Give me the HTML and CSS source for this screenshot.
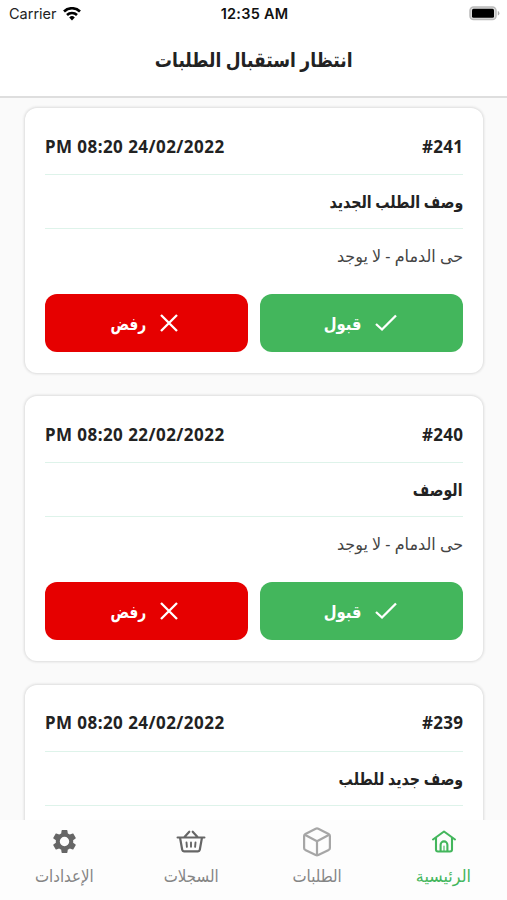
FILE: index.html
```html
<!DOCTYPE html>
<html lang="ar" dir="rtl">
<head>
<meta charset="utf-8">
<meta name="viewport" content="width=device-width">
<title>انتظار استقبال الطلبات</title>
<link rel="stylesheet" href="styles.css">
</head>
<body>
<svg class="defs" aria-hidden="true">
  <symbol id="check" viewBox="0 0 22 18"><path d="M1 10 7 15.500 21 1.500" fill="none" stroke="currentColor" stroke-width="2.300"/></symbol>
  <symbol id="cross" viewBox="0 0 18 18"><path d="M1 1 17 17M17 1 1 17" fill="none" stroke="currentColor" stroke-width="2.300"/></symbol>
</svg>
<div class="app">
  <div class="status" dir="ltr">
    <div class="carrier"><span>Carrier</span>
      <svg width="18" height="14" viewBox="0 0 18 14"><g fill="none" stroke="#000" stroke-width="2.600"><path d="M1 4.500a11.400 11.400 0 0 1 16 0"/><path d="M4 8a7.200 7.200 0 0 1 10 0"/></g><path d="M6.200 10.400a4 4 0 0 1 5.600 0L9 13.400z"/></svg>
    </div>
    <div class="time">12:35 AM</div>
    <svg class="battery" width="31" height="15" viewBox="0 0 31 15"><rect x="1" y="1" width="26" height="12.600" rx="3.600" fill="#ddd" stroke="#bbb" stroke-width="1.500"/><rect x="3" y="2.800" width="22" height="9" rx="1.500"/><path d="M28.800 5v4.500q1.600-.5 1.600-2.200T28.800 5z" fill="#aaa"/></svg>
  </div>
  <header class="header"><h1>انتظار استقبال الطلبات</h1></header>
  <main class="list">
    <article class="card">
      <div class="row top"><span class="num" dir="ltr">#241</span><span class="date" dir="ltr">PM 08:20 24/02/2022</span></div>
      <div class="row title"><span>وصف الطلب الجديد</span></div>
      <div class="place"><span>حى الدمام - لا يوجد</span></div>
      <div class="actions">
        <button class="btn accept"><svg class="check"><use href="#check"/></svg><span>قبول</span></button>
        <button class="btn reject"><svg class="cross"><use href="#cross"/></svg><span>رفض</span></button>
      </div>
    </article>
    <article class="card">
      <div class="row top"><span class="num" dir="ltr">#240</span><span class="date" dir="ltr">PM 08:20 22/02/2022</span></div>
      <div class="row title"><span>الوصف</span></div>
      <div class="place"><span>حى الدمام - لا يوجد</span></div>
      <div class="actions">
        <button class="btn accept"><svg class="check"><use href="#check"/></svg><span>قبول</span></button>
        <button class="btn reject"><svg class="cross"><use href="#cross"/></svg><span>رفض</span></button>
      </div>
    </article>
    <article class="card">
      <div class="row top"><span class="num" dir="ltr">#239</span><span class="date" dir="ltr">PM 08:20 24/02/2022</span></div>
      <div class="row title"><span>وصف جديد للطلب</span></div>
      <div class="place"></div>
    </article>
  </main>
  <nav class="tabs">
    <a class="tab active"><svg width="28" height="30" viewBox="0 0 28 30"><g fill="none" stroke="currentColor" stroke-width="2.100" stroke-linecap="round" stroke-linejoin="round"><path d="M3 12.500 14 4.500 25 12.500"/><path d="M6 11v11.500q0 2 2 2h12q2 0 2-2V11"/><path d="M10.600 24v-6.200a3.400 3.400 0 0 1 6.800 0V24"/><path d="M14 19v5" stroke-width="1.100"/></g></svg><span>الرئيسية</span></a>
    <a class="tab"><svg class="cube" width="28" height="30" viewBox="0 0 28 30"><g fill="none" stroke="currentColor" stroke-width="2.200" stroke-linejoin="round"><path d="M12.700 1.700q1.300-.6 2.600 0l10.300 5.200q1.300.7 1.300 2v12q0 1.300-1.200 2L15.300 28q-1.300.7-2.600 0L2.300 22.900q-1.200-.7-1.200-2v-12q0-1.300 1.300-2z"/><path d="M1.800 7.800 14 14.300 26.200 7.800M14 14.300V28"/></g></svg><span>الطلبات</span></a>
    <a class="tab"><svg width="30" height="30" viewBox="0 0 30 30"><g fill="none" stroke="#666" stroke-width="2.200" stroke-linecap="round" stroke-linejoin="round"><path d="M1.600 10.500h26.800M4 10.500l2.200 12.300q.3 1.500 1.800 1.500h14q1.500 0 1.800-1.500L26 10.500M8.500 10 13.300 4.700M21.500 10 16.700 4.700"/><path d="m10.500 15.500.4 4.300M15 15.500v4.300M19.500 15.500l-.4 4.300" stroke-width="1.900"/></g></svg><span>السجلات</span></a>
    <a class="tab"><svg width="29" height="29" viewBox="0 0 24 24"><path fill="#666" d="M19.140 12.940c.04-.3.060-.61.060-.94 0-.32-.02-.64-.07-.94l2.030-1.580c.18-.14.230-.41.120-.61l-1.920-3.320c-.12-.22-.37-.29-.59-.22l-2.390.96c-.5-.38-1.030-.7-1.620-.94l-.36-2.540c-.04-.24-.24-.41-.48-.41h-3.840c-.24 0-.43.17-.47.410l-.36 2.540c-.59.240-1.130.570-1.620.940l-2.390-.96c-.22-.08-.47 0-.59.220L2.740 8.870c-.12.210-.08.470.12.610l2.030 1.580c-.05.300-.09.630-.09.940s.02.640.070.940l-2.030 1.580c-.18.140-.23.410-.12.610l1.920 3.320c.12.220.37.290.59.220l2.390-.96c.5.380 1.030.7 1.620.94l.36 2.540c.05.240.24.410.48.410h3.840c.24 0 .44-.17.470-.41l.36-2.540c.59-.24 1.130-.56 1.620-.94l2.390.96c.22.080.47 0 .59-.22l1.920-3.320c.12-.22.070-.47-.12-.61zM12 15.900a3.900 3.900 0 1 1 0-7.800 3.900 3.900 0 0 1 0 7.800z"/></svg><span>الإعدادات</span></a>
  </nav>
</div>
</body>
</html>
```
FILE: styles.css
```css
* { box-sizing: border-box; }
body { margin: 0; background: #fafafa; color: #222; font-family: "Noto Sans", "DejaVu Sans", sans-serif; }
.defs { position: absolute; width: 0; height: 0; }
.app { display: flex; flex-direction: column; height: 900px; overflow: hidden; }
span, h1 { white-space: nowrap; }
.status { display: grid; grid-template-columns: 1fr auto 1fr; align-items: center; height: 28px; flex: none; padding: 0 7px 2px 9px; background: #fff; font: 14.5px/26px Inter, sans-serif; color: #222; }
.carrier { display: flex; align-items: center; gap: 6px; }
.time { font-weight: 600; color: #111; letter-spacing: .25px; padding-top: 1px; }
.carrier span { padding-top: 1px; }
.battery { justify-self: end; }
.header { flex: none; height: 69.5px; background: #fff; border-bottom: 2px solid #dedede; display: flex; justify-content: center; align-items: center; padding-bottom: 5px; }
h1 { margin: 0; font-size: 20px; font-weight: 700; transform: scaleX(.855); }
.list { flex: 1; min-height: 0; overflow: hidden; padding: 10.5px 24px 0 25px; display: flex; flex-direction: column; gap: 23.3px; }
.card { flex: none; height: 265px; background: #fff; border-radius: 12px; padding: 12px 20px 0; box-shadow: 0 0 2.5px 1px #dcdcdc; }
.row { display: flex; justify-content: space-between; align-items: center; border-bottom: 1.5px solid #def3ea; height: 54px; font-weight: 700; }
.top { height: 55px; padding-bottom: 2px; font-size: 17px; }
.date { letter-spacing: .45px; }
.num { letter-spacing: .3px; margin-right: -.3px; }
.title { font-size: 17px; }
.title span { transform: scaleX(.835); transform-origin: right; }
.place { height: 65px; padding-bottom: 12px; display: flex; align-items: center; font-size: 16.5px; color: #444; }
.place span { transform: scaleX(.97); transform-origin: right; }
.actions { display: grid; grid-template-columns: 1fr 1fr; gap: 12px; }
.btn { height: 58px; border: 0; border-radius: 12px; color: #fff; font: 700 17px "Noto Sans", "DejaVu Sans", sans-serif; display: flex; align-items: center; justify-content: center; gap: 14px; padding: 0; }
.btn span { transform-origin: right; }
.accept { background: #43b65c; padding-right: 2px; }
.accept span { transform: scaleX(.87); margin-left: -6px; }
.reject { background: #e60000; padding-right: 5px; }
.reject span { transform: scaleX(.81); margin-left: -8px; }
.check { width: 22px; height: 18px; }
.cross { width: 18px; height: 18px; }
.tabs { flex: none; height: 80px; background: #fdfdfd; display: grid; grid-template-columns: repeat(4, 1fr); padding-left: 1px; font-size: 16.5px; color: #858585; }
.tab { display: grid; grid-template-rows: 43px 24px; justify-items: center; align-items: center; align-content: start; padding-top: 0; }
.tab span { transform: scaleX(.91); }
.tab.active span { transform: scaleX(.97); }
.active { color: #43b65c; }
.cube { color: #a6a6a6; }
```
